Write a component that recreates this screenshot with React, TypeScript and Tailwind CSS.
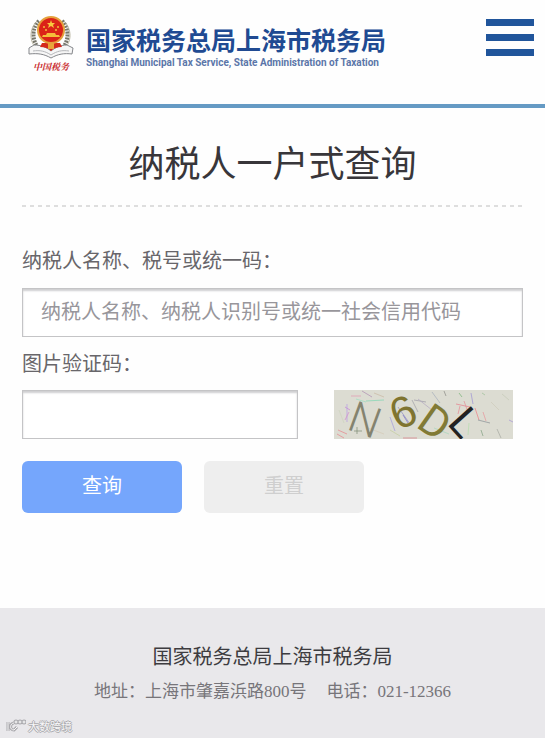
import React from "react";

// [x1, y1, x2, y2, colour]
const noise: [number, number, number, number, string][] = [
  [17, 6, 27, 6, "#e39ab0"],
  [28, 1, 38, 7, "#b08fb4"],
  [32, 11, 50, 10, "#7fd8b4"],
  [22, 9, 32, 12, "#9adfc0"],
  [11, 17, 16, 20, "#c77fd6"],
  [13, 14, 13, 32, "#b79be8"],
  [15, 22, 11, 30, "#d48ad0"],
  [4, 40, 13, 44, "#e9848c"],
  [3, 44, 10, 48, "#e9848c"],
  [20, 41, 28, 41, "#7d8a72"],
  [23, 37, 23, 44, "#7d8a72"],
  [40, 3, 50, 7, "#cbb9a4"],
  [56, 27, 61, 41, "#a39ae0"],
  [64, 17, 76, 34, "#8f8bc4"],
  [69, 25, 74, 33, "#7b75c9"],
  [78, 10, 84, 22, "#a0a0a8"],
  [80, 10, 92, 12, "#9c9aa6"],
  [84, 9, 98, 20, "#b3a9c2"],
  [98, 2, 106, 13, "#a7b0bd"],
  [110, 1, 112, 6, "#8c8c86"],
  [69, 48, 83, 48, "#d87b86"],
  [56, 40, 66, 46, "#c5cf9f"],
  [125, 3, 128, 7, "#78b578"],
  [122, 14, 136, 17, "#e77f8c"],
  [126, 16, 124, 24, "#e98892"],
  [130, 11, 134, 22, "#e28f98"],
  [137, 3, 139, 14, "#9d93d6"],
  [141, 18, 145, 30, "#ef7f86"],
  [144, 30, 156, 33, "#8a9196"],
  [149, 22, 152, 31, "#e9979c"],
  [148, 3, 151, 5, "#9ec29a"],
  [147, 40, 149, 46, "#83a283"],
  [163, 39, 167, 48, "#a7aaa2"],
  [175, 30, 179, 32, "#a795d8"],
  [135, 33, 134, 45, "#b6dfae"],
  [168, 4, 175, 10, "#c6cbb9"],
  [5, 20, 10, 33, "#cfd5bf"],
  [34, 38, 50, 44, "#d6cbb8"],
  [100, 38, 115, 44, "#a8d8bd"],
  [157, 12, 165, 20, "#cfcbbb"],
];

function Captcha() {
  return (
    <svg width="179" height="49" viewBox="0 0 179 49" role="img" aria-label="图片验证码" className="block">
      <rect width="179" height="49" fill="#dcdcd2" />
      {noise.map(([x1, y1, x2, y2, color], index) => (
        <line key={index} x1={x1} y1={y1} x2={x2} y2={y2} stroke={color} strokeWidth="1" opacity="0.7" />
      ))}
      <g fontFamily="'Liberation Sans', sans-serif" fontSize="42" textAnchor="middle">
        <text x="0" y="15" fontFamily="Roboto, sans-serif" fontSize="43" fontWeight="300" fill="#84836f" transform="translate(31 30) rotate(20)">N</text>
        <text x="0" y="15" fontSize="44" fill="#7f7430" transform="translate(69 22) rotate(-24)">6</text>
        <text x="0" y="15" fontFamily="Roboto, sans-serif" fontSize="43" fill="#817a35" transform="translate(101 32) rotate(35)">D</text>
        <text x="0" y="15" fontFamily="Roboto, sans-serif" fill="#222222" transform="translate(131 32) rotate(48)">L</text>
      </g>
    </svg>
  );
}

function Emblem() {
  return (
    <svg width="46" height="44" viewBox="0 0 46 44" aria-hidden="true">
      <g fill="none" stroke="#77766a" strokeWidth="4" strokeDasharray="2 1">
        <path d="M11 6C4 12 3 26 12 35" />
        <path d="M34 6C41 12 42 26 33 35" />
      </g>
      <g fill="none" stroke="#b9b5a0" strokeWidth="1">
        <path d="M9 6C1 14 1 27 9 34" />
        <path d="M36 6C44 14 44 27 36 34" />
      </g>
      <path
        d="M1 33l5-3c7 0 12 2 17 6 5-4 10-6 16-6l6 3-1 6c-8-1-14 0-21 4-7-4-13-5-22-4z"
        fill="#f6f6f6"
        stroke="#85878b"
        strokeWidth="1"
      />
      <path d="M5 36c7-1 12 0 18 4 6-4 11-5 18-4" fill="none" stroke="#b5b7ba" />
      <path d="M14 28h18l2 4c-5 0-8 1-11 4-3-3-6-4-11-4z" fill="#d5291c" />
      <path d="M20 28h6v6h-6z" fill="#e9a63a" />
      <circle cx="23" cy="15" r="13" fill="#db2318" stroke="#e5a13d" strokeWidth="2" />
      <path d="M23 5l1 3h3l-2 2 1 3-3-2-3 2 1-3-2-2h3z" fill="#f8ca3f" />
      <g fill="#f4bd3a">
        <circle cx="16" cy="12" r="1" />
        <circle cx="18" cy="15" r="1" />
        <circle cx="28" cy="15" r="1" />
        <circle cx="30" cy="12" r="1" />
        <path d="M14 22l1-2h3l1-2h8l1 2h3l1 2z" />
      </g>
    </svg>
  );
}

function Header() {
  return (
    <header className="flex h-[108px] items-start justify-between border-b-4 border-[#659ac4] pl-7 pr-[11px] pt-[15px]">
      <a href="#" className="flex gap-3">
        <div className="flex w-[46px] flex-col items-center">
          <Emblem />
          <span className="font-['Noto_Serif_CJK_SC','Noto_Sans_CJK_SC',serif] text-[9px] font-bold italic leading-4 text-[#c9282b]">
            中国税务
          </span>
        </div>
        <div className="pt-1.5">
          <div className="whitespace-nowrap text-[25px] font-bold leading-9 text-[#204a92]">
            国家税务总局上海市税务局
          </div>
          <div className="whitespace-nowrap font-[Roboto,sans-serif] text-[10px] font-bold leading-3 text-[#5b76a9]">
            Shanghai Municipal Tax Service, State Administration of Taxation
          </div>
        </div>
      </a>
      <button type="button" aria-label="菜单" className="mt-1 flex w-12 flex-col gap-2">
        <span className="h-[7px] w-full bg-[#20559b]" />
        <span className="h-[7px] w-full bg-[#20559b]" />
        <span className="h-[7px] w-full bg-[#20559b]" />
      </button>
    </header>
  );
}

function QueryForm() {
  return (
    <form className="flex flex-col pt-[39px]" onSubmit={(e) => e.preventDefault()}>
      <label htmlFor="taxpayer" className="text-xl leading-7 text-[#68666a]">
        纳税人名称、税号或统一码：
      </label>
      <input
        id="taxpayer"
        type="text"
        placeholder="纳税人名称、纳税人识别号或统一社会信用代码"
        className="mt-3.5 h-[49px] w-full border border-[#c4c4c6] bg-white px-[18px] pb-1 text-xl shadow-[inset_0_2px_2px_#cfcfd1] outline-none placeholder:text-[#98969b]"
      />
      <label htmlFor="code" className="mt-3 text-xl leading-7 text-[#68666a]">
        图片验证码：
      </label>
      <div className="mt-[13px] flex items-center gap-9 pr-2.5">
        <input
          id="code"
          type="text"
          className="h-[49px] min-w-0 flex-1 border border-[#c4c4c6] bg-white px-[18px] pb-1 text-xl shadow-[inset_0_2px_2px_#cfcfd1] outline-none"
        />
        <Captcha />
      </div>
      <div className="mt-[22px] flex gap-[22px]">
        <button type="submit" className="h-[52px] w-40 rounded-md bg-[#75a6fc] pb-1 text-xl text-white">
          查询
        </button>
        <button type="reset" className="h-[52px] w-40 rounded-md bg-[#eeeeee] pb-1 text-xl text-[#cfcfcf]">
          重置
        </button>
      </div>
    </form>
  );
}

function Watermark() {
  return (
    <div className="absolute bottom-1 left-1.5 flex items-center gap-0.5">
      <svg width="20" height="14" viewBox="0 0 20 14" fill="none" aria-hidden="true">
        <g stroke="#aaa9ad" strokeWidth="3">
          <path d="M2 3v9M8 4c-4 0-5 7 0 7l3-3" />
          <circle cx="10" cy="3" r="1" />
          <circle cx="14" cy="3" r="1" />
          <circle cx="18" cy="3" r="1" />
        </g>
        <g stroke="#f7f7f8" strokeWidth="1">
          <path d="M2 3v9M8 4c-4 0-5 7 0 7l3-3" />
          <circle cx="10" cy="3" r="1" />
          <circle cx="14" cy="3" r="1" />
          <circle cx="18" cy="3" r="1" />
        </g>
      </svg>
      <span className="text-[11px] leading-4 text-[#f7f7f8] [text-shadow:1px_0_#aaa9ad,-1px_0_#aaa9ad,0_1px_#aaa9ad,0_-1px_#aaa9ad]">
        大数跨境
      </span>
    </div>
  );
}

function Footer() {
  return (
    <footer className="relative flex flex-1 flex-col items-center bg-[#e9e8eb] pb-8 pt-[34px]">
      <p className="text-xl leading-7 text-[#3d3c40]">国家税务总局上海市税务局</p>
      <p className="mt-2 flex gap-5 whitespace-nowrap font-['Liberation_Serif','Noto_Sans_CJK_SC',serif] text-[17px] leading-7 text-[#77757a]">
        <span>地址：上海市肇嘉浜路800号</span>
        <span>电话：021-12366</span>
      </p>
      <Watermark />
    </footer>
  );
}

function App() {
  return (
    <div className="flex min-h-screen flex-col bg-[#fefefe] font-['Noto_Sans_CJK_SC',sans-serif]">
      <Header />
      <main className="px-[22px] pb-[95px] pt-[26px]">
        <h1 className="pb-[17px] text-center text-4xl leading-[54px] text-[#38363a]">
          纳税人一户式查询
        </h1>
        <div className="h-[2px] bg-[repeating-linear-gradient(90deg,#dedede_0_4px,transparent_4px_8px)]" />
        <QueryForm />
      </main>
      <Footer />
    </div>
  );
}

export default App;
